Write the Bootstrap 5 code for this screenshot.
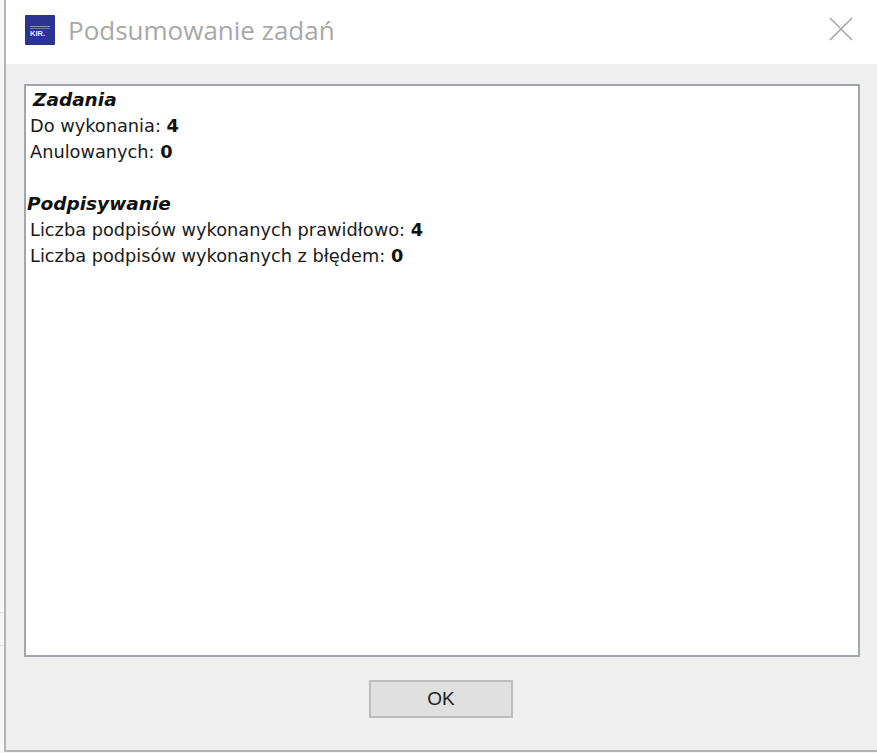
<!DOCTYPE html>
<html lang="pl">
<head>
    <meta charset="UTF-8">
    <meta name="viewport" content="width=device-width, initial-scale=1.0">
    <title>Podsumowanie zadań</title>
    <link href="https://cdn.jsdelivr.net/npm/bootstrap@5.3.0/dist/css/bootstrap.min.css" rel="stylesheet">
    <style>
        html, body { height: 100%; }
        body {
            background-color: #f7f7f7;
            background-image: linear-gradient(#dedede, #dedede), linear-gradient(#dedede, #dedede);
            background-repeat: no-repeat;
            background-size: 4px 1px;
            background-position: 0 612px, 0 645px;
            overflow: hidden;
            padding-left: 4px;
            padding-bottom: 1px;
        }
        .dialog-frame {
            height: 752px;
            border-left: 2px solid #b4b4b4;
            border-bottom: 2px solid #b4b4b4;
            background: #efefef;
        }
        .title-strip {
            height: 64px;
            background: #fff;
            padding: 0 24px 0 19px;
        }
        .app-logo { width: 30px; height: 30px; flex: none; margin-top: -4px; }
        .dialog-title {
            font-family: "Open Sans", sans-serif;
            font-size: 26px;
            color: #a8a8a8;
            margin: -3px 0 0 13px;
        }
        .close-x { width: 24px; height: 24px; flex: none; margin-top: -7px; }
        .content-area { padding: 20px 17px 0 18px; }
        .summary-box {
            height: 573px;
            background: #fff;
            border: 2px solid #a2a7ae;
            padding: 1px 4px;
            font-family: "DejaVu Sans", sans-serif;
            font-size: 17.75px;
            line-height: 26px;
            color: #1a1a1a;
        }
        .summary-box b { color: #111; }
        .sum-head { font-weight: 700; font-style: italic; font-size: 18.5px; color: #111; }
        .sum-head-first { padding-left: 3px; }
        .sum-head-second { margin-left: -3px; margin-top: 26px; }
        .btn-wrap { padding-right: 2px; }
        .ok-btn {
            width: 144px;
            height: 38px;
            margin-top: 23px;
            padding: 0;
            font-family: "Liberation Sans", sans-serif;
            font-size: 19px;
            color: #222;
            background: #e0e0e0;
            border: 2px solid #bdbdbd;
            border-radius: 0;
        }
    </style>
</head>
<body>
    <div class="dialog-frame d-flex flex-column">
        <div class="title-strip d-flex align-items-center">
            <svg class="app-logo" viewBox="0 0 30 30">
                <rect width="30" height="30" rx="1" fill="#2b3490"/>
                <rect x="5" y="11" width="20" height="1" fill="#8f95c8"/>
                <rect x="5" y="13" width="20" height="1" fill="#6d74b6"/>
                <text x="5" y="20.5" font-family="Liberation Sans" font-weight="700" font-size="7.5" fill="#e6e8f5">KIR.</text>
            </svg>
            <span class="dialog-title flex-grow-1">Podsumowanie zadań</span>
            <svg class="close-x" viewBox="0 0 24 24">
                <path d="M1 1 L23 23 M23 1 L1 23" stroke="#a6a6a6" stroke-width="1.6" fill="none"/>
            </svg>
        </div>
        <div class="content-area flex-grow-1 d-flex flex-column">
            <div class="summary-box">
                <div class="sum-head sum-head-first">Zadania</div>
                <div>Do wykonania: <b>4</b></div>
                <div>Anulowanych: <b>0</b></div>
                <div class="sum-head sum-head-second">Podpisywanie</div>
                <div>Liczba podpisów wykonanych prawidłowo: <b>4</b></div>
                <div>Liczba podpisów wykonanych z błędem: <b>0</b></div>
            </div>
            <div class="text-center btn-wrap">
                <button type="button" class="btn ok-btn">OK</button>
            </div>
        </div>
    </div>
    <script src="https://cdn.jsdelivr.net/npm/bootstrap@5.3.0/dist/js/bootstrap.bundle.min.js"></script>
</body>
</html>
